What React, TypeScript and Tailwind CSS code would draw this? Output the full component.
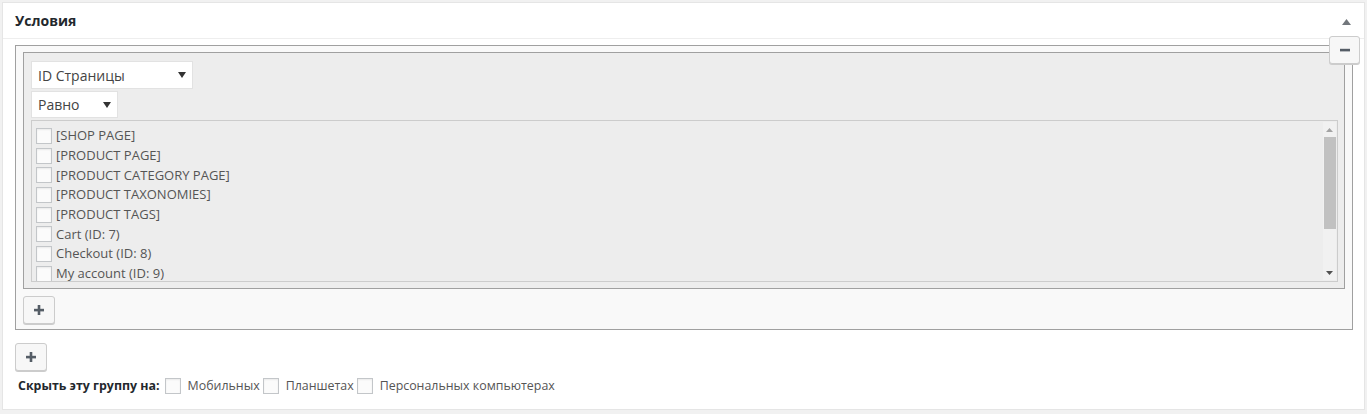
import React from 'react';

const pages = [
  '[SHOP PAGE]',
  '[PRODUCT PAGE]',
  '[PRODUCT CATEGORY PAGE]',
  '[PRODUCT TAXONOMIES]',
  '[PRODUCT TAGS]',
  'Cart (ID: 7)',
  'Checkout (ID: 8)',
  'My account (ID: 9)',
];

const devices = ['Мобильных', 'Планшетах', 'Персональных компьютерах'];

const Box = ({ size = 16 }: { size?: number }) => (
  <span
    className="inline-block shrink-0 border border-[#c3c6c9] bg-[#fbfbfb] shadow-[inset_0_1px_2px_rgba(0,0,0,0.07)]"
    style={{ width: size, height: size }}
  />
);

const Caret = () => (
  <svg width="8" height="6" viewBox="0 0 8 6" className="shrink-0">
    <path d="M0 0h8L4 6z" fill="#333" />
  </svg>
);

const IconButton = ({ minus = false, className = '' }: { minus?: boolean; className?: string }) => (
  <button
    className={`flex items-center justify-center rounded-[3px] border border-[#cccccc] bg-[#f7f7f7] shadow-[0_1px_0_#cccccc] ${className}`}
  >
    <svg width="12" height="12" viewBox="0 0 12 12">
      <rect x="1" y="4.8" width="10" height="2.6" fill="#555d66" />
      {!minus && <rect x="4.7" y="1" width="2.6" height="10" fill="#555d66" />}
    </svg>
  </button>
);

export default function App() {
  return (
    <div className="h-[414px] bg-[#f1f1f1] p-[2px] font-['Open_Sans',_'Noto_Sans',_sans-serif] text-[#444]">
      <div className="relative h-[408px] border border-[#e5e5e5] bg-white">
        {/* header */}
        <div className="flex h-[36px] items-center justify-between border-b border-[#eeeeee] pl-3 pr-[13px]">
          <h2 className="text-[14px] font-bold leading-none text-[#23282d]">Условия</h2>
          <svg width="9" height="6" viewBox="0 0 9 6" className="mt-[2px]">
            <path d="M0 6h9L4.5 0z" fill="#72777c" />
          </svg>
        </div>

        <IconButton minus className="absolute right-[4px] top-[33px] h-[28px] w-[31px]" />

        <div className="pl-3 pr-[11px] pt-[6px]">
          {/* condition group */}
          <div className="border border-[#a0a0a0] bg-[#f9f9f9] px-[7px] pb-[5px] pt-[6px]">
            <div className="border border-[#a0a0a0] bg-[#ededed] pb-[6px] pl-[7px] pr-[6px] pt-[8px]">
              <div className="flex h-[28px] w-[162px] items-center justify-between border border-[#e2e2e2] bg-white pl-[6px] pr-[6px] text-[14px]">
                <span>ID Страницы</span>
                <Caret />
              </div>
              <div className="mt-[2px] flex h-[27px] w-[87px] items-center justify-between border border-[#e2e2e2] bg-white pl-[6px] pr-[6px] text-[14px]">
                <span>Равно</span>
                <Caret />
              </div>
              <div className="mt-[2px] flex h-[162px] overflow-hidden border border-[#cccccc] bg-[#ededed]">
                <div className="flex-1 overflow-hidden pl-1 pt-[5px]">
                  {pages.map((p) => (
                    <label key={p} className="flex h-[19.7px] items-center gap-[4px] text-[13px] text-[#555]">
                      <Box />
                      <span className="leading-none">{p}</span>
                    </label>
                  ))}
                </div>
                <div className="my-[1px] mr-[1px] flex w-[13px] flex-col items-center bg-[#f1f1f1]">
                  <div className="flex h-[15px] items-center justify-center">
                    <svg width="7" height="4" viewBox="0 0 7 4">
                      <path d="M0 4h7L3.5 0z" fill="#a3a3a3" />
                    </svg>
                  </div>
                  <div className="h-[92px] w-[12px] bg-[#c1c1c1]" />
                  <div className="flex-1" />
                  <div className="flex h-[15px] items-center justify-center">
                    <svg width="7" height="4" viewBox="0 0 7 4">
                      <path d="M0 0h7L3.5 4z" fill="#505050" />
                    </svg>
                  </div>
                </div>
              </div>
            </div>
            <IconButton className="mt-[7px] h-[28px] w-[32px]" />
          </div>

          <IconButton className="mt-[13px] h-[28px] w-[32px]" />

          <div className="mt-[6px] flex items-center pl-[3px] text-[12.4px]">
            <span className="mr-[5px] font-bold text-[#23282d]">Скрыть эту группу на:</span>
            {devices.map((d) => (
              <label key={d} className="mr-[3px] flex items-center gap-[7px] text-[#555]">
                <Box />
                <span>{d}</span>
              </label>
            ))}
          </div>
        </div>
      </div>
    </div>
  );
}
